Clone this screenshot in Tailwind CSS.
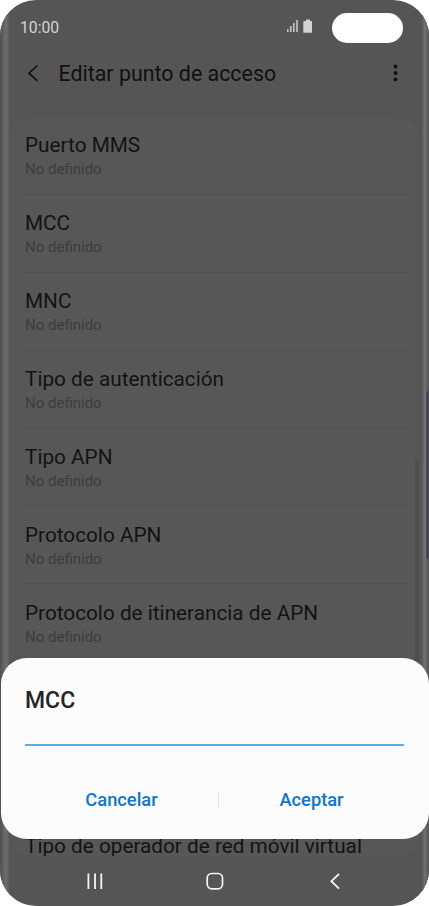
<!DOCTYPE html>
<html lang="es">
<head>
  <meta charset="UTF-8" />
  <title>Editar punto de acceso</title>
  <meta name="viewport" content="width=device-width, initial-scale=1.0" />
  <script src="https://cdn.jsdelivr.net/npm/@tailwindcss/browser@4"></script>
</head>
<body class="bg-white font-[Roboto,sans-serif]">
  <div class="relative flex flex-col w-[429px] h-[906px] overflow-hidden rounded-[36px] bg-[#555555]">
    <!-- curved screen edges -->
    <div class="absolute inset-y-0 left-0 w-[10px] bg-linear-to-r from-[#505050] via-[#6e6e70] via-60% to-[#555555]"></div>
    <div class="absolute inset-y-0 right-0 w-[7px] bg-linear-to-r from-[#5c5c5c] via-[#717173] via-40% to-[#525252]"></div>

    <header class="h-[116px] shrink-0">
      <div class="flex h-[54px] pl-5 pr-[26px]">
        <span class="mt-[17px] text-[15.700px] leading-[21px] text-[#d2d2d2]">10:00</span>
        <svg class="ml-auto mt-[19px] w-[12px] h-[14px]" viewBox="0 0 12 14" fill="#c4c4c4">
          <path d="M0 10h1.600v3H0zM3 7h1.600v6H3zM6 4h1.600v9H6zM9.200 1h1.600v12H9.200z" />
        </svg>
        <svg class="ml-[4px] mt-[19px] w-[10px] h-[14px]" viewBox="0 0 10 14" fill="#d2d2d2">
          <path d="M3 .5h4v1.400h1.200q.8 0 .8.8v10.500q0 .6-.8.6H1.100q-.8 0-.8-.6V2.700q0-.8.8-.8H3z" />
        </svg>
        <div class="ml-[19px] mt-[13px] w-[71px] h-[30px] rounded-full bg-white"></div>
      </div>
      <div class="flex items-center h-[40px] pl-[27px] pr-[31px]">
        <svg class="w-[12px] h-[18px] -mt-[2px]" viewBox="0 0 12 18" fill="none" stroke="#111" stroke-width="1.700">
          <path d="M10.300 1.500 2 9.200l8.300 7.700" />
        </svg>
        <h1 class="ml-[19.500px] text-[21.400px] leading-[26px] whitespace-nowrap text-[#111]">Editar punto de acceso</h1>
        <svg class="ml-auto w-[5px] h-[18px] -mt-[2px]" viewBox="0 0 5 18" fill="#111">
          <circle cx="2.500" cy="2.500" r="1.900" /><circle cx="2.500" cy="9" r="1.900" /><circle cx="2.500" cy="15.300" r="1.900" />
        </svg>
      </div>
    </header>

    <main class="relative flex-1 min-h-0 mx-[10px] overflow-hidden rounded-[20px] border-t border-[#525252] bg-[#575757]">
      <ul class="px-[11px] text-[#131313]">
        <li class="h-[77.900px] px-[4px] pt-[15.300px] border-b border-[#505050]">
          <p class="text-[20.750px] leading-[26px]">Puerto MMS</p>
          <p class="text-[15px] leading-[22px] text-[#3d3d3d]">No definido</p>
        </li>
        <li class="h-[77.900px] px-[4px] pt-[15.300px] border-b border-[#505050]">
          <p class="text-[20.750px] leading-[26px]">MCC</p>
          <p class="text-[15px] leading-[22px] text-[#3d3d3d]">No definido</p>
        </li>
        <li class="h-[77.900px] px-[4px] pt-[15.300px] border-b border-[#505050]">
          <p class="text-[20.750px] leading-[26px]">MNC</p>
          <p class="text-[15px] leading-[22px] text-[#3d3d3d]">No definido</p>
        </li>
        <li class="h-[77.900px] px-[4px] pt-[15.300px] border-b border-[#505050]">
          <p class="text-[20.750px] leading-[26px]">Tipo de autenticación</p>
          <p class="text-[15px] leading-[22px] text-[#3d3d3d]">No definido</p>
        </li>
        <li class="h-[77.900px] px-[4px] pt-[15.300px] border-b border-[#505050]">
          <p class="text-[20.750px] leading-[26px]">Tipo APN</p>
          <p class="text-[15px] leading-[22px] text-[#3d3d3d]">No definido</p>
        </li>
        <li class="h-[77.900px] px-[4px] pt-[15.300px] border-b border-[#505050]">
          <p class="text-[20.750px] leading-[26px]">Protocolo APN</p>
          <p class="text-[15px] leading-[22px] text-[#3d3d3d]">No definido</p>
        </li>
        <li class="h-[233.700px] px-[4px] pt-[15.300px]">
          <p class="text-[20.750px] leading-[26px]">Protocolo de itinerancia de APN</p>
          <p class="text-[15px] leading-[22px] text-[#3d3d3d]">No definido</p>
        </li>
        <li class="px-[4px] pt-[15.300px]">
          <p class="text-[20.750px] leading-[26px] whitespace-nowrap">Tipo de operador de red móvil virtual</p>
        </li>
      </ul>
      <!-- scrollbar -->
      <div class="absolute top-[342px] right-0 w-[4px] h-[300px] rounded-full bg-[#4e4e4e]"></div>
    </main>

    <nav class="flex items-center h-[50px] shrink-0 pl-[86px] text-[#f5f5f5]">
      <svg class="w-[18px] h-[18px]" viewBox="0 0 18 18" fill="none" stroke="currentColor" stroke-width="1.800">
        <path d="M2.400 1.500v15.500M9 1.500v15.500M15.300 1.500v15.500" />
      </svg>
      <svg class="ml-[102px] w-[18px] h-[18px]" viewBox="0 0 18 18" fill="none" stroke="currentColor" stroke-width="1.700">
        <rect x="1.200" y="1.500" width="15.300" height="15.300" rx="4.500" />
      </svg>
      <svg class="ml-[105px] w-[12px] h-[18px]" viewBox="0 0 12 18" fill="none" stroke="currentColor" stroke-width="1.800">
        <path d="M10 2 2.400 9.200l7.600 7.400" />
      </svg>
    </nav>

    <!-- edge panel handle -->
    <div class="absolute top-[390px] right-0 w-[4px] h-[170px] rounded-l-[4px] border-l border-[#77777d] bg-[#45434f]"></div>

    <!-- dialog -->
    <div class="absolute top-[657.500px] inset-x-0 h-[181.500px] mx-[.5px] rounded-[26px] bg-[#fcfcfc] px-[24.500px]">
      <h2 class="pt-[27px] text-[23px] leading-[32px] font-medium text-[#252525]">MCC</h2>
      <div class="mt-[27.500px] w-[379px] h-[2px] bg-[#5eaceb]"></div>
      <div class="flex items-center mt-[42px] text-[18.300px] leading-[24px] font-medium text-[#0b76d3]">
        <span class="w-[193px] text-center">Cancelar</span>
        <span class="w-px h-[16px] bg-[#e2e2e2]"></span>
        <span class="w-[185px] text-center">Aceptar</span>
      </div>
    </div>
  </div>
</body>
</html>
